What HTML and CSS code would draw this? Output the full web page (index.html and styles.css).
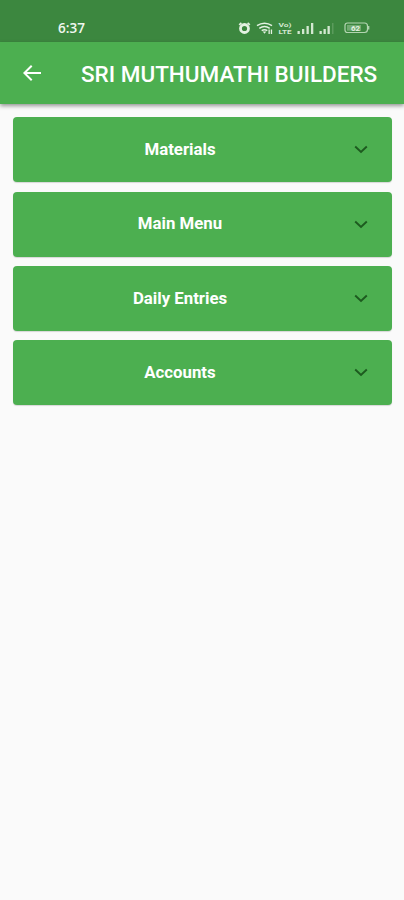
FILE: index.html
```html
<!DOCTYPE html>
<html lang="en">
<head>
<meta charset="utf-8">
<title>SRI MUTHUMATHI BUILDERS</title>
<link rel="stylesheet" href="styles.css">
</head>
<body>
<div class="status">
  <span class="time">6:37</span>
  <svg class="indicators" width="134" height="16" viewBox="0 0 134 16" fill="none">
    <g stroke="#e4f1e2">
      <circle cx="8.500" cy="8.500" r="4" stroke-width="2.800"/>
      <path d="M3.200 4.800l2.200-2M13.800 4.800l-2.200-2" stroke-width="1.700"/>
      <path d="M21 5.700q7.500-5 15 0M23.300 8.300q5.200-3.400 10.400 0M25.700 10.700q2.800-1.800 5.600 0" stroke-width="1.500"/>
    </g>
    <path d="M26.700 11.500h3.600l-1.800 2.200zM32.500 9.500h1.300V14h-1.300zM34.800 9.500h1.300V14h-1.300z" fill="#e4f1e2"/>
    <text class="volte" x="42.500" y="6.800" textLength="13" lengthAdjust="spacingAndGlyphs">Vo)</text>
    <text class="volte" x="42.500" y="14" textLength="13" lengthAdjust="spacingAndGlyphs">LTE</text>
    <path d="M61.500 11h2.300v3h-2.300zM66 9h2.300v5H66zM70.500 6h2.300v8h-2.300zM75 3h2.300v11H75zM83.500 11h2.300v3h-2.300zM87.500 9h2.300v5h-2.300zM91.500 6h2.300v8h-2.300z" fill="#d3e8d1"/>
    <path d="M96 3h1.500v11H96z" fill="#5b9b5c"/>
    <path d="M111.500 3h17q3 0 3 3v3.500q0 3-3 3h-17q-2.500 0-2.500-2.500V5.500Q109 3 111.500 3z" stroke="#b3d5b1" stroke-width="1.200"/>
    <path d="M111 5h14v5.700h-14z" fill="#72ab72"/>
    <path d="M132.700 6v3.500" stroke="#b3d5b1" stroke-width="1.300"/>
    <text class="charge" x="115" y="10.800">62</text>
  </svg>
</div>
<header class="appbar">
  <svg class="back" width="24" height="24" viewBox="0 0 24 24"><path d="M21 11H6.830l5.590-5.590L11 4l-8 8 8 8 1.410-1.410L6.830 13H21z"/></svg>
  <h1>SRI MUTHUMATHI BUILDERS</h1>
</header>
<main>
  <div class="card"><span>Materials</span><svg class="chevron" width="14" height="9" viewBox="0 0 14 9"><path d="M1.200 1.500L7 7l5.800-5.500"/></svg></div>
  <div class="card"><span>Main Menu</span><svg class="chevron" width="14" height="9" viewBox="0 0 14 9"><path d="M1.200 1.500L7 7l5.800-5.500"/></svg></div>
  <div class="card"><span>Daily Entries</span><svg class="chevron" width="14" height="9" viewBox="0 0 14 9"><path d="M1.200 1.500L7 7l5.800-5.500"/></svg></div>
  <div class="card"><span>Accounts</span><svg class="chevron" width="14" height="9" viewBox="0 0 14 9"><path d="M1.200 1.500L7 7l5.800-5.500"/></svg></div>
</main>
</body>
</html>
```
FILE: styles.css
```css
* { box-sizing: border-box; }
body {
  margin: 0;
  min-height: 900px;
  background: #fafafa;
  font-family: Roboto, sans-serif;
  color: #fff;
}
.status {
  height: 42px;
  padding: 20px 34px 0 58px;
  display: flex;
  justify-content: space-between;
  align-items: flex-start;
  background: #3c873f;
}
.time {
  font: 600 13.500px/16px "Open Sans", sans-serif;
  color: #f0f7ef;
}
.indicators { display: block; }
.volte { font: 700 6px Roboto, sans-serif; fill: #d3e8d1; }
.charge { font: 700 8px Roboto, sans-serif; fill: #e4f1e2; }
.appbar {
  height: 62px;
  padding: 0 20px;
  display: flex;
  align-items: center;
  background: #4caf50;
  box-shadow: 0 2px 4px rgba(0, 0, 0, .4);
}
.back { flex: none; fill: #fff; }
h1 {
  margin: 2px 0 0 37px;
  font-size: 22.500px;
  line-height: 28px;
  font-weight: 500;
  white-space: nowrap;
}
main {
  padding: 13.400px 12px 0 12.500px;
  display: grid;
  gap: 9.300px;
}
.card {
  height: 65px;
  padding-right: 24px;
  display: flex;
  align-items: center;
  background: #4caf50;
  border-radius: 4px;
  box-shadow: 0 1px 1px rgba(0, 0, 0, .14);
}
.card span {
  flex: 1;
  padding: 0 6.500px 1.500px 0;
  text-align: center;
  font-size: 16.800px;
  line-height: 20px;
  font-weight: 700;
}
.chevron { fill: none; stroke: #1d5a1f; stroke-width: 1.900; }
```
